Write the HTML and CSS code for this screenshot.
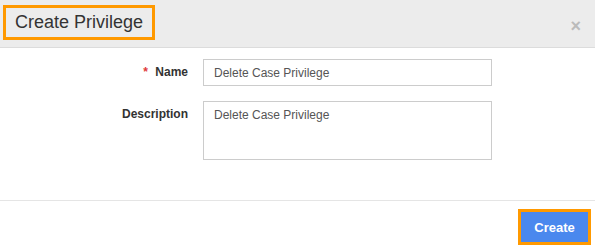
FILE: index.html
```html
<!DOCTYPE html>
<html lang="en">

<head>
    <meta charset="UTF-8">
    <meta name="viewport" content="width=device-width, initial-scale=1.0">
    <title>Create Privilege</title>
    <link rel="stylesheet" href="styles.css">
</head>

<body>
    <div class="modal">
        <div class="modal-header">
            <h4 class="modal-title">Create Privilege</h4>
            <span class="close">&times;</span>
        </div>

        <div class="modal-body">
            <form class="form-grid">
                <label for="name"><span class="required">*</span> Name</label>
                <input type="text" id="name" value="Delete Case Privilege">

                <label for="description">Description</label>
                <textarea id="description">Delete Case Privilege</textarea>
            </form>
        </div>

        <div class="modal-footer">
            <span class="highlight">
                <button type="button" class="btn-create">Create</button>
            </span>
        </div>
    </div>
</body>

</html>
```

FILE: styles.css
```css
* {
    box-sizing: border-box;
}

body {
    font-family: "Liberation Sans", Arial, Helvetica, sans-serif;
    font-size: 13px;
    color: #333;
    margin: 0;
    padding: 0;
    background-color: white;
}

.modal {
    width: 595px;
    height: 249px;
}

.modal-header {
    display: flex;
    justify-content: space-between;
    align-items: flex-start;
    height: 48px;
    padding: 5px 14px 0 3px;
    background-color: #ececec;
    border-bottom: 1px solid #dcdcdc;
}

.modal-title {
    margin: 0;
    height: 35px;
    padding: 0 9px;
    border: 3px solid #ff9900;
    font-size: 18px;
    font-weight: normal;
    line-height: 29px;
    color: #333;
}

.close {
    margin-top: 12px;
    font-size: 18px;
    font-weight: bold;
    line-height: 1;
    color: #bbb;
}

/* form area */
.modal-body {
    height: 153px;
    padding-top: 11px;
    border-bottom: 1px solid #e5e5e5;
}

.form-grid {
    display: grid;
    grid-template-columns: 188px 289px;
    column-gap: 15px;
    row-gap: 15px;
}

.form-grid label {
    text-align: right;
    font-size: 12px;
    font-weight: bold;
    padding-top: 6px;
}

.required {
    color: #e03a3a;
    margin-right: 4px;
}

.form-grid input,
.form-grid textarea {
    font-family: "Liberation Sans", Arial, Helvetica, sans-serif;
    font-size: 12px;
    color: #555;
    border: 1px solid #ccc;
    padding: 5px 10px;
    margin: 0;
    resize: none;
}

.form-grid input {
    height: 27px;
}

.form-grid textarea {
    height: 59px;
    padding-top: 6px;
}

.modal-footer {
    display: flex;
    justify-content: flex-end;
    padding: 8px 4px 0 0;
}

.highlight {
    display: inline-block;
    border: 3px solid #ff9900;
}

.btn-create {
    display: block;
    width: 67px;
    height: 30px;
    border: none;
    background-color: #4a88ee;
    color: white;
    font-family: "Liberation Sans", Arial, Helvetica, sans-serif;
    font-size: 13px;
    font-weight: bold;
}
```
